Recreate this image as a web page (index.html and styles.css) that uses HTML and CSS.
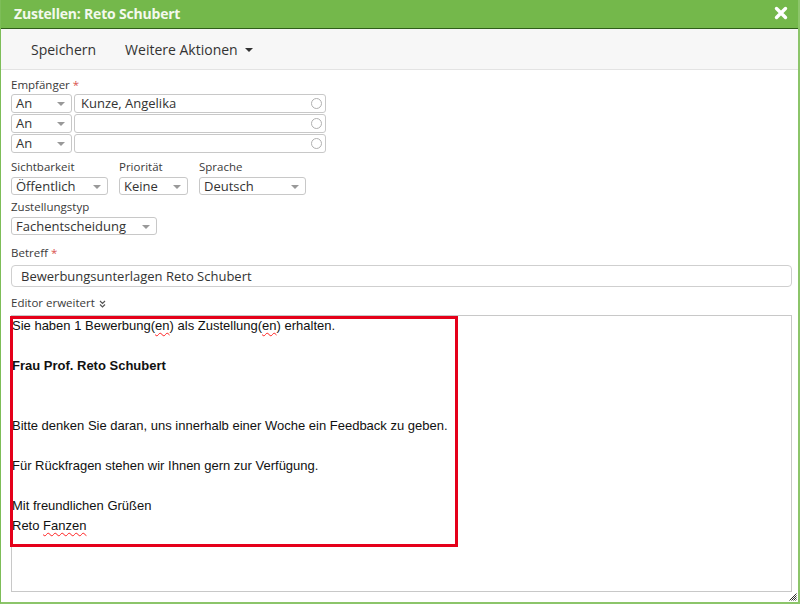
FILE: index.html
```html
<!DOCTYPE html>
<html lang="de">
<head>
<meta charset="utf-8">
<link rel="stylesheet" href="styles.css">
</head>
<body>
<div class="dialog">
  <div class="titlebar">
    <span class="title">Zustellen: Reto Schubert</span>
    <svg class="close" width="14" height="14" viewBox="0 0 14 14"><path d="M2.5 2.5 L11.5 11.5 M11.5 2.5 L2.5 11.5" stroke="#fff" stroke-width="3.4" stroke-linecap="round"/></svg>
  </div>
  <div class="toolbar">
    <span class="tb-item">Speichern</span>
    <span class="tb-item">Weitere Aktionen <span class="caret"></span></span>
  </div>
  <div class="content">
    <div class="label first">Empfänger <span class="req">*</span></div>
    <div class="rows">
      <div class="row">
        <div class="sel w-an">An<span class="arr"></span></div>
        <div class="inp w-rec">Kunze, Angelika<span class="circ"></span></div>
      </div>
      <div class="row">
        <div class="sel w-an">An<span class="arr"></span></div>
        <div class="inp w-rec"><span class="circ"></span></div>
      </div>
      <div class="row">
        <div class="sel w-an">An<span class="arr"></span></div>
        <div class="inp w-rec"><span class="circ"></span></div>
      </div>
    </div>
    <div class="fields g1">
      <div class="field">
        <div class="label">Sichtbarkeit</div>
        <div class="sel w-vis">Öffentlich<span class="arr"></span></div>
      </div>
      <div class="field">
        <div class="label">Priorität</div>
        <div class="sel w-pri">Keine<span class="arr"></span></div>
      </div>
      <div class="field">
        <div class="label">Sprache</div>
        <div class="sel w-lang">Deutsch<span class="arr"></span></div>
      </div>
    </div>
    <div class="fields g2">
      <div class="field">
        <div class="label">Zustellungstyp</div>
        <div class="sel w-typ">Fachentscheidung<span class="arr"></span></div>
      </div>
    </div>
    <div class="label betreff">Betreff <span class="req">*</span></div>
    <div class="subject">Bewerbungsunterlagen Reto Schubert</div>
    <div class="label edlabel">Editor erweitert <svg class="dchev" width="7" height="8" viewBox="0 0 7 8"><path d="M1 1 L3.5 3.5 L6 1 M1 4.5 L3.5 7 L6 4.5" fill="none" stroke="#555" stroke-width="1.2"/></svg></div>
    <div class="editor">
      <div class="edtext">
        <p>Sie haben 1 Bewerbung(<span class="sp">en</span>) als Zustellung(<span class="sp">en</span>) erhalten.</p>
        <p>&nbsp;</p>
        <p><b>Frau Prof. Reto Schubert</b></p>
        <p>&nbsp;</p>
        <p>&nbsp;</p>
        <p>Bitte denken Sie daran, uns innerhalb einer Woche ein Feedback zu geben.</p>
        <p>&nbsp;</p>
        <p>Für Rückfragen stehen wir Ihnen gern zur Verfügung.</p>
        <p>&nbsp;</p>
        <p>Mit freundlichen Grüßen</p>
        <p>Reto <span class="sp">Fanzen</span></p>
      </div>
      <div class="highlight"></div>
    </div>
    <div class="gripline">
      <svg class="grip" width="8" height="8" viewBox="0 0 8 8"><path d="M7.5 0.5 L0.5 7.5 M7.5 2.5 L2.5 7.5 M7.5 4.5 L4.5 7.5 M7.5 6.5 L6.5 7.5" stroke="#333" stroke-width="1"/></svg>
    </div>
  </div>
</div>
</body>
</html>
```

FILE: styles.css
```css
* { box-sizing: border-box; }
html, body { margin: 0; padding: 0; background: #fff; }
body { font-family: "Open Sans", "Liberation Sans", sans-serif; color: #333; }

.dialog {
  width: 800px;
  height: 604px;
  border-left: 1px solid #7dbd58;
  border-right: 2px solid #8cc56a;
  border-bottom: 2px solid #8cc56a;
  display: flex;
  flex-direction: column;
  overflow: hidden;
}

.titlebar {
  height: 29px;
  flex: none;
  background: #74b84b;
  border-bottom: 1px solid #2f5f1a;
  display: flex;
  align-items: center;
  justify-content: space-between;
  padding: 0 8px 1px 14px;
  margin-left: -1px;
}
.title {
  font-weight: 700;
  font-size: 14px;
  color: #f3f9ee;
  letter-spacing: -0.2px;
}
.close { margin-top: -1px; margin-right: 2px; }

.toolbar {
  height: 41px;
  flex: none;
  background: #f7f7f7;
  border-bottom: 1px solid #e3e3e3;
  display: flex;
  align-items: center;
  padding: 0 0 0 30px;
  gap: 29px;
}
.tb-item { font-size: 14px; color: #333; display: flex; align-items: center; }
.caret {
  display: inline-block;
  width: 0; height: 0;
  border-left: 4px solid transparent;
  border-right: 4px solid transparent;
  border-top: 4px solid #333;
  margin-left: 7px;
  margin-top: 2px;
}

.content {
  flex: 1;
  padding: 0 0 0 10px;
  display: flex;
  flex-direction: column;
}

.label {
  font-size: 11.5px;
  line-height: 16px;
  height: 16px;
  color: #3a3a3a;
}
.req { color: #d9534f; }
.first { margin-top: 7px; }

.rows { margin-top: 1px; display: flex; flex-direction: column; gap: 1px; }
.row { display: flex; gap: 2px; }

.sel, .inp {
  height: 19px;
  border: 1px solid #c8c8c8;
  border-radius: 3px;
  background: #fff;
  font-size: 13px;
  line-height: 17px;
  color: #333;
  padding-left: 4px;
  position: relative;
  white-space: nowrap;
}
.sel .arr {
  position: absolute;
  right: 6px;
  top: 7px;
  width: 0; height: 0;
  border-left: 4px solid transparent;
  border-right: 4px solid transparent;
  border-top: 4px solid #999;
}
.inp { padding-left: 6px; }
.inp .circ {
  position: absolute;
  right: 3px;
  top: 3px;
  width: 11px; height: 11px;
  border: 1.5px solid #b0b0b0;
  border-radius: 50%;
}
.w-an { width: 61px; }
.w-rec { width: 252px; }
.w-vis { width: 97px; }
.w-pri { width: 69px; }
.w-lang { width: 107px; }
.w-typ { width: 146px; }

.fields { display: flex; gap: 11px; }
.g1 { margin-top: 6px; }
.g2 { margin-top: 4px; }
.field { display: flex; flex-direction: column; gap: 2px; }
.field .sel { height: 18px; line-height: 16px; }

.betreff { margin-top: 10px; }
.subject {
  margin-top: 4px;
  width: 781px;
  height: 22px;
  border: 1px solid #cfcfcf;
  border-radius: 4px;
  font-size: 13px;
  line-height: 20px;
  padding-left: 9px;
  color: #333;
}

.edlabel { margin-top: 8px; display: flex; align-items: center; gap: 4px; }
.dchev { margin-top: 1px; }

.editor {
  margin-top: 4px;
  width: 781px;
  height: 277px;
  flex: none;
  border: 1px solid #c8c8c8;
  position: relative;
  background: #fff;
  font-family: "Liberation Sans", Arial, sans-serif;
  font-size: 13px;
  color: #111;
}
.edtext { padding: 0; }
.edtext p { margin: 0; line-height: 20px; height: 20px; white-space: nowrap; }
.sp {
  text-decoration-line: underline;
  text-decoration-style: wavy;
  text-decoration-color: #ff2020;
  text-decoration-thickness: 1px;
  text-underline-offset: 2px;
}
.highlight {
  position: absolute;
  left: -2px;
  top: 0;
  width: 448px;
  height: 231px;
  border: 3px solid #e5001a;
}

.gripline { display: flex; justify-content: flex-end; width: 786px; padding-top: 1px; flex: none; }
```
